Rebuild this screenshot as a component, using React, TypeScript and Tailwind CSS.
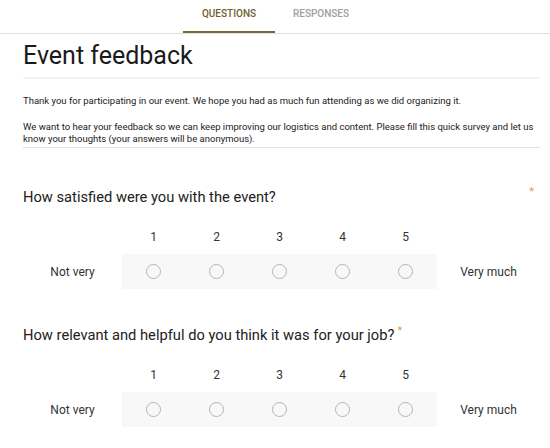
import React from "react";

function Scale({ title, starRight }: { title: string; starRight: boolean }) {
  const nums = [1, 2, 3, 4, 5];
  return (
    <div>
      <div className="flex items-start justify-between h-[20px]">
        <div className="text-[14.7px] leading-[20px] text-[#212121]">
          {title}
          {!starRight && (
            <span className="ml-[3px] align-top text-[11px] leading-[12px] text-[#dd9a5c]">*</span>
          )}
        </div>
        {starRight && (
          <span className="mr-[6px] mt-[-1px] text-[11px] leading-[12px] text-[#dd9a5c]">*</span>
        )}
      </div>
      <div className="mt-[22px] grid grid-cols-[99px_repeat(5,63px)_103px]">
        <div className="h-[25px]" />
        {nums.map((n) => (
          <div key={n} className="h-[25px] text-center text-[12px] leading-[16px] text-[#333333]">
            {n}
          </div>
        ))}
        <div className="h-[25px]" />
        <div className="flex h-[35px] items-center justify-center text-[12px] text-[#333333]">
          Not very
        </div>
        {nums.map((n) => (
          <div key={n} className="flex h-[35px] items-center justify-center bg-[#f8f8f8]">
            <div className="h-[15px] w-[15px] rounded-full border-[1.5px] border-[#b5b5b5]" />
          </div>
        ))}
        <div className="flex h-[35px] items-center justify-center text-[12px] text-[#333333]">
          Very much
        </div>
      </div>
    </div>
  );
}

export default function App() {
  return (
    <div className="h-[448px] w-[550px] overflow-hidden bg-white font-[Roboto,sans-serif]">
      <div className="flex justify-center border-b border-[#e0e0e0]">
        <div className="h-[33px] w-[92px] border-b-2 border-[#7a6a35] pt-[8px] text-center text-[10px] font-medium leading-[12px] text-[#6f5f2c]">
          QUESTIONS
        </div>
        <div className="h-[33px] w-[92px] pt-[8px] text-center text-[10px] font-medium leading-[12px] text-[#a0a0a0]">
          RESPONSES
        </div>
      </div>
      <div className="pl-[23px] pr-[10px]">
        <div className="mt-[8px] border-b-2 border-[#f3f3f3] pb-[7px]">
          <h1 className="text-[25px] leading-[28px] text-[#1a1a1a]">Event feedback</h1>
        </div>
        <div className="mt-[16px] border-b border-[#e3e3e3] pb-[2px] text-[9.5px] leading-[12px] text-[#212121]">
          <p>Thank you for participating in our event. We hope you had as much fun attending as we did organizing it.</p>
          <p className="mt-[14px]">
            We want to hear your feedback so we can keep improving our logistics and content. Please fill this quick survey and let us know your thoughts (your answers will be anonymous).
          </p>
        </div>
        <div className="mt-[39px]">
          <Scale title="How satisfied were you with the event?" starRight={true} />
        </div>
        <div className="mt-[36px]">
          <Scale title="How relevant and helpful do you think it was for your job?" starRight={false} />
        </div>
      </div>
    </div>
  );
}
